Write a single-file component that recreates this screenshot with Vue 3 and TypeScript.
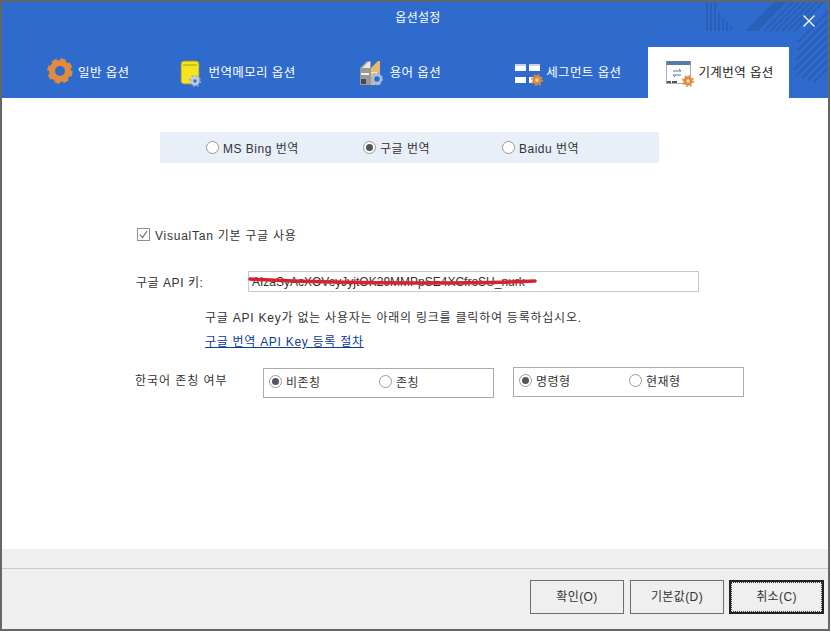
<script setup lang="ts">
interface Tab { key: string; label: string }

const tabs: Tab[] = [
  { key: 'general', label: '일반 옵션' },
  { key: 'memory', label: '번역메모리 옵션' },
  { key: 'term', label: '용어 옵션' },
  { key: 'segment', label: '세그먼트 옵션' },
  { key: 'mt', label: '기계번역 옵션' },
]
const active = 'mt'

const engines = [
  { label: 'MS Bing 번역', on: false },
  { label: '구글 번역', on: true },
  { label: 'Baidu 번역', on: false },
]
const honorific = [
  { label: '비존칭', on: true },
  { label: '존칭', on: false },
]
const mood = [
  { label: '명령형', on: true },
  { label: '현재형', on: false },
]
const buttons = [
  { label: '확인(O)', focus: false },
  { label: '기본값(D)', focus: false },
  { label: '취소(C)', focus: true },
]
</script>

<template>
  <div class="win">
    <header class="head">
      <svg class="decor" width="130" height="95" viewBox="0 0 130 95">
        <g fill="#2a5fb8">
          <rect x="8" y="0" width="2" height="29" /><rect x="12" y="0" width="2" height="29" />
          <rect x="16" y="0" width="2" height="29" /><rect x="20" y="10" width="2" height="19" />
          <rect x="24" y="16" width="2" height="13" /><rect x="28" y="20" width="2" height="9" />
          <rect x="32" y="24" width="2" height="5" />
          <polygon points="48,29 76,0 88,0 60,29" />
        </g>
        <g stroke="#2a5fb8" stroke-width="2" fill="none">
          <path d="M66 29 95 0M72 29 101 0M78 29 107 0M84 29 113 0M90 29 119 0M96 29 125 0" />
          <path d="M100 40 130 10M100 48 130 18M98 58 130 26M96 68 130 34M98 74 130 42M104 76 130 50M110 78 130 58M116 80 130 66" />
        </g>
      </svg>
      <div class="title">옵션설정</div>
      <svg class="close" width="12" height="12" viewBox="0 0 12 12">
        <path d="M.5.5 11.5 11.5M11.5.5.5 11.5" stroke="#fff" stroke-width="1.2" fill="none" />
      </svg>
      <nav class="tabs">
        <div v-for="t in tabs" :key="t.key" class="tab" :class="[t.key, { on: t.key === active }]">
          <svg v-if="t.key === 'general'" width="26" height="26" viewBox="0 0 26 26">
            <circle cx="13" cy="13" r="8" fill="none" stroke="#e08b3e" stroke-width="6" />
            <circle cx="13" cy="13" r="11" fill="none" stroke="#e08b3e" stroke-width="3.4" stroke-dasharray="5.2 3.44" />
          </svg>
          <svg v-else-if="t.key === 'memory'" width="23" height="27" viewBox="0 0 23 27">
            <rect x="1" y="3" width="18" height="23" rx="3" fill="#f6e51e" stroke="#8f8a3a" stroke-width=".8" />
            <path d="M3 7h14" stroke="#a29a28" stroke-width="1" />
            <circle cx="15" cy="23" r="3.2" fill="#3f6db3" stroke="#b9cbea" stroke-width="3" />
            <circle cx="15" cy="23" r="5.4" fill="none" stroke="#8fa9d6" stroke-width="1.4" stroke-dasharray="2 2.24" />
          </svg>
          <svg v-else-if="t.key === 'term'" width="25" height="27" viewBox="0 0 25 27">
            <g transform="translate(0 2)">
              <polygon points="1,8 8,1 12,1 12,25 1,25" fill="#9a9a98" />
              <polygon points="3,8 9,2 11,2 11,8" fill="#e9e9e6" />
              <polygon points="12,8 19,1 21,1 21,25 12,25" fill="#e3bc70" />
              <rect x="2" y="13" width="8" height="2" fill="#f2f2f2" />
              <rect x="2" y="19" width="5" height="5" fill="#4a4a4a" />
              <rect x="12" y="12" width="6" height="1.5" fill="#f5e3bd" />
            </g>
            <circle cx="18" cy="21" r="4" fill="#2f6bcc" stroke="#a9bfe6" stroke-width="2.4" />
            <circle cx="18" cy="21" r="5.6" fill="none" stroke="#8fa9d6" stroke-width="1.2" stroke-dasharray="2 2.4" />
          </svg>
          <svg v-else-if="t.key === 'segment'" width="29" height="25" viewBox="0 0 29 25">
            <rect x="1" y="5" width="11" height="7" fill="#fff" />
            <rect x="15" y="5" width="11" height="7" fill="#fff" />
            <rect x="1" y="5" width="11" height="2" fill="#c7d4ea" />
            <rect x="15" y="5" width="11" height="2" fill="#c7d4ea" />
            <rect x="1" y="18" width="11" height="6" fill="#fff" />
            <rect x="15" y="18" width="4" height="6" fill="#fff" />
            <circle cx="23" cy="21" r="3.2" fill="#fbe7c6" stroke="#df8a3c" stroke-width="3" />
            <circle cx="23" cy="21" r="5.4" fill="none" stroke="#df8a3c" stroke-width="1.4" stroke-dasharray="2 2.24" />
          </svg>
          <svg v-else width="29" height="27" viewBox="0 0 29 27">
            <rect x=".5" y="3.5" width="24" height="22" fill="#fff" stroke="#8a98ad" stroke-width=".8" />
            <rect x=".5" y="3" width="24" height="4" fill="#5a7aa8" />
            <path d="M7 13h8l-2-2M15 17H7l2 2" fill="none" stroke="#5d7590" stroke-width="1" />
            <path d="M1 24h4M6 24h5" stroke="#555" stroke-width="2" />
            <circle cx="22" cy="23" r="3.2" fill="#f8e3bf" stroke="#e08b3e" stroke-width="3" />
            <circle cx="22" cy="23" r="5.4" fill="none" stroke="#e08b3e" stroke-width="1.4" stroke-dasharray="2 2.24" />
          </svg>
          <span>{{ t.label }}</span>
        </div>
      </nav>
    </header>

    <main class="body">
      <div class="band">
        <label v-for="e in engines" :key="e.label" class="opt">
          <span class="radio" :class="{ on: e.on }"></span>{{ e.label }}
        </label>
      </div>

      <label class="check-row">
        <span class="check">
          <svg width="9" height="9" viewBox="0 0 9 9">
            <path d="M1 4.5 3.5 7.5 8 1" fill="none" stroke="#666" stroke-width="1.1" />
          </svg>
        </span>
        VisualTan 기본 구글 사용
      </label>

      <div class="key-row">
        <span class="key-label">구글 API 키:</span>
        <div class="key-box">
          <input class="key-input" readonly value="AIzaSyAcXOVeyJyjtOK29MMPpSE4XCfroSU_nurk" />
          <svg class="scribble" width="290" height="10" viewBox="0 0 290 10">
            <path d="M2 3C60 6 120 7 170 7S250 7 287 5" fill="none" stroke="#d8222e" stroke-width="3.6" stroke-linecap="round" />
          </svg>
        </div>
      </div>

      <p class="hint">구글 API Key가 없는 사용자는 아래의 링크를 클릭하여 등록하십시오.</p>
      <a class="link" href="#">구글 번역 API Key 등록 절차</a>

      <div class="pref-row">
        <span class="pref-label">한국어 존칭 여부</span>
        <div class="group">
          <label v-for="o in honorific" :key="o.label" class="opt">
            <span class="radio" :class="{ on: o.on }"></span>{{ o.label }}
          </label>
        </div>
        <div class="group second">
          <label v-for="o in mood" :key="o.label" class="opt">
            <span class="radio" :class="{ on: o.on }"></span>{{ o.label }}
          </label>
        </div>
      </div>
    </main>

    <footer class="foot">
      <div class="foot-top"></div>
      <div class="foot-btns">
        <button v-for="b in buttons" :key="b.label" class="btn" :class="{ focus: b.focus }">
          <span>{{ b.label }}</span>
        </button>
      </div>
    </footer>
  </div>
</template>

<style>
html, body { margin: 0; background: #fff; }
</style>

<style scoped>
.win {
  width: 830px;
  height: 631px;
  box-sizing: border-box;
  display: flex;
  flex-direction: column;
  border-left: 2px solid #666;
  border-right: 2px solid #666;
  border-bottom: 2px solid #666;
  border-top: 2px solid #5f6670;
  font: 12px "Liberation Sans", "Noto Sans CJK KR", sans-serif;
  color: #333;
}

.head {
  position: relative;
  height: 96px;
  flex: none;
  background: #2f6bcc;
  color: #fff;
  display: flex;
  flex-direction: column;
}
.decor { position: absolute; right: 0; top: 0; }
.close { position: absolute; right: 13px; top: 13px; }
.title { text-align: center; padding-top: 8px; line-height: 16px; margin-right: -6px; letter-spacing: .3px; }

.tabs {
  margin-top: auto;
  height: 51px;
  display: flex;
  padding-left: 45px;
}
.tab {
  position: relative;
  display: flex;
  align-items: center;
  gap: 5px;
  font-size: 12.5px;
  letter-spacing: .4px;
  padding-bottom: 3px;
}
.tab svg { overflow: visible; }
.tab.memory { margin-left: 51px; }
.tab.term { margin-left: 63px; gap: 6px; }
.tab.segment { margin-left: 73px; gap: 3px; }
.tab.mt {
  margin-left: 27px;
  padding: 0 15px 3px 18px;
  gap: 3px;
  background: #fff;
  color: #222;
}

.body {
  flex: 1;
  background: #fff;
  padding: 34px 0 0 134px;
  display: flex;
  flex-direction: column;
  align-items: flex-start;
}
.band {
  width: 499px;
  height: 31px;
  margin-left: 24px;
  padding-left: 46px;
  box-sizing: border-box;
  background: #e8eff9;
  display: flex;
  align-items: center;
}
.band .opt { width: 157px; }
.band .opt:nth-child(2) { width: 139px; }

.opt { display: flex; align-items: center; gap: 4px; letter-spacing: .5px; }
.radio {
  width: 11px;
  height: 11px;
  flex: none;
  border: 1px solid #9a9a9a;
  border-radius: 50%;
  background: #fff;
  position: relative;
}
.radio.on::after {
  content: "";
  position: absolute;
  inset: 2px;
  border-radius: 50%;
  background: #555;
}

.check-row {
  margin: 65px 0 0 1px;
  display: flex;
  align-items: center;
  gap: 5px;
  height: 12px;
  letter-spacing: .75px;
}
.check {
  width: 11px;
  height: 11px;
  border: 1px solid #8e8e8e;
  display: flex;
  align-items: center;
  justify-content: center;
}

.key-row { display: flex; align-items: center; margin-top: 31px; }
.key-label { width: 112px; letter-spacing: .55px; }
.key-box { position: relative; }
.key-input {
  display: block;
  width: 451px;
  height: 21px;
  box-sizing: border-box;
  border: 1px solid #c8c8c8;
  padding: 0 3px;
  font: 12px "Liberation Sans", sans-serif;
  color: #333;
  outline: none;
}
.scribble { position: absolute; left: 0; top: 5px; }

.hint { margin: 16px 0 0 69px; line-height: 20px; letter-spacing: .77px; }
.link {
  margin: 4px 0 0 69px;
  line-height: 20px;
  color: #0a3a9c;
  text-decoration: underline;
  letter-spacing: .72px;
}

.pref-row { display: flex; align-items: flex-start; margin-top: 16px; }
.pref-label { width: 128px; padding-top: 6px; line-height: 14px; margin-left: -1px; letter-spacing: .95px; }
.group {
  width: 231px;
  height: 30px;
  box-sizing: border-box;
  border: 1px solid #aaa;
  padding: 0 0 3px 5px;
  display: flex;
  align-items: center;
}
.group .opt { width: 110px; }
.group.second { margin: -1px 0 0 19px; }

.foot {
  height: 80px;
  flex: none;
  background: #efefef;
  display: flex;
  flex-direction: column;
}
.foot-top { height: 19px; flex: none; border-bottom: 1px solid #c9c9c9; box-sizing: content-box; }
.foot-btns {
  display: flex;
  justify-content: flex-end;
  gap: 6px;
  padding: 11px 4px 0 0;
}
.btn {
  width: 94px;
  height: 34px;
  padding: 0 0 3px;
  border: 1px solid #6e6e6e;
  background: #efefef;
  font: 12px "Liberation Sans", "Noto Sans CJK KR", sans-serif;
  letter-spacing: .4px;
  color: #333;
  display: flex;
}
.btn span { flex: 1; display: flex; align-items: center; justify-content: center; }
.btn.focus { border: 2px solid #222; width: 95px; margin-left: -1px; padding: 0; }
.btn.focus span { border: 1px dotted #333; padding-bottom: 3px; }
</style>
